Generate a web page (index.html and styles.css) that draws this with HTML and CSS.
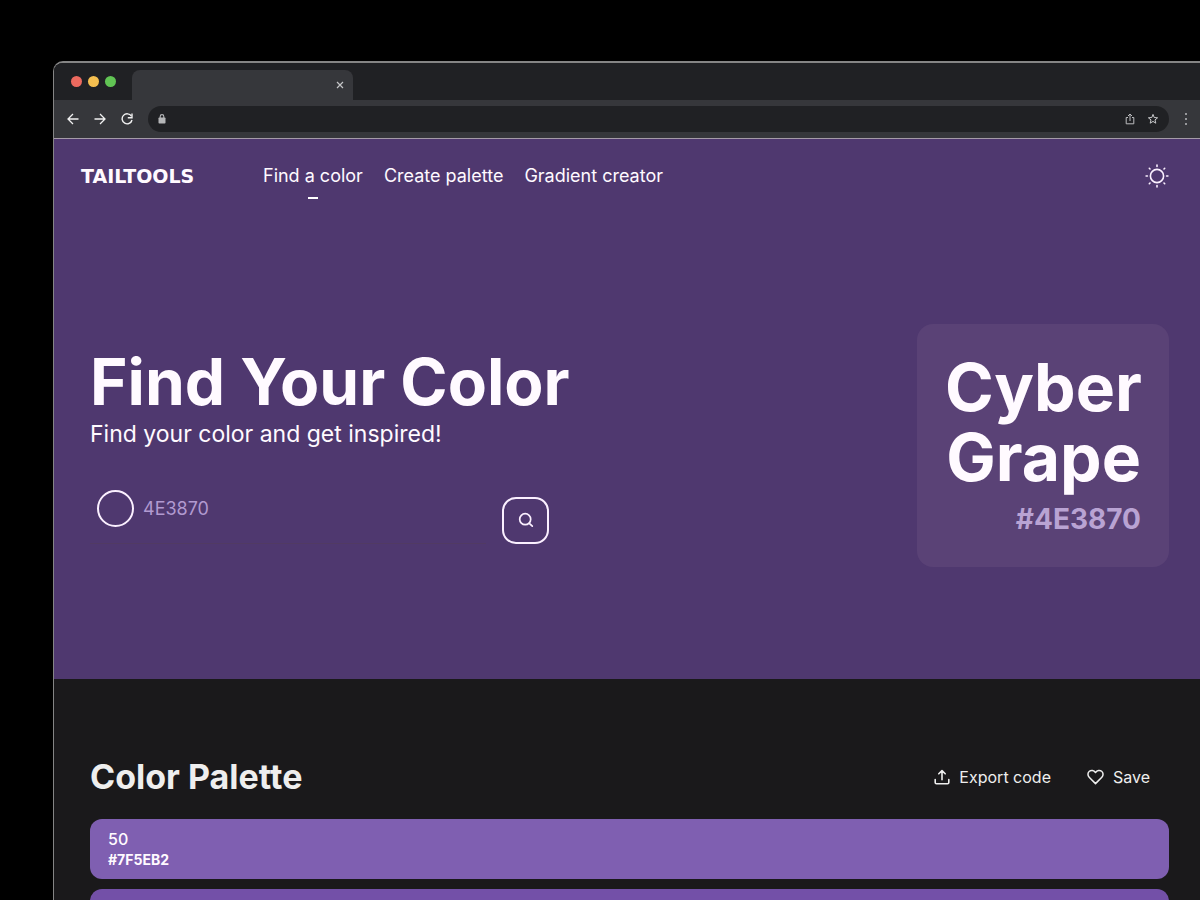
FILE: index.html
```html
<!DOCTYPE html>
<html lang="en">
<head>
<meta charset="utf-8">
<meta name="viewport" content="width=device-width, initial-scale=1">
<title>Tailtools</title>
<link rel="stylesheet" href="styles.css">
</head>
<body>
<div class="window">
  <div class="tabs">
    <div class="lights"><span class="light red"></span><span class="light yellow"></span><span class="light green"></span></div>
    <div class="tab">
      <button class="icon-button" aria-label="Close tab"><svg width="8" height="8" viewBox="0 0 8 8" stroke="#c4c5c7" stroke-width="1.2"><path d="M1 1l6 6M7 1L1 7"/></svg></button>
    </div>
  </div>
  <div class="toolbar">
    <button class="icon-button" aria-label="Back"><svg width="12" height="12" viewBox="0 0 12 12" fill="none" stroke="#f1f1f1" stroke-width="1.3"><path d="M11.500 6H1.200M6 1L1 6l5 5"/></svg></button>
    <button class="icon-button" aria-label="Forward"><svg width="12" height="12" viewBox="0 0 12 12" fill="none" stroke="#f1f1f1" stroke-width="1.3"><path d="M.5 6h10.300M6 1l5 5-5 5"/></svg></button>
    <button class="icon-button" aria-label="Reload"><svg width="12" height="12" viewBox="0 0 12 12" fill="none" stroke="#f1f1f1" stroke-width="1.4"><path d="M10.400 3.200A5 5 0 1 0 11 7"/><path d="M11 .5v4.200H6.800"/></svg></button>
    <div class="address">
      <svg width="8" height="10" viewBox="0 0 8 10"><rect x=".5" y="3.500" width="7" height="6" rx=".8" fill="#b5b6b8"/><path d="M2.200 4V2.400a1.800 1.800 0 0 1 3.600 0V4" fill="none" stroke="#b5b6b8" stroke-width="1.100"/></svg>
      <input class="url" type="text" aria-label="Address">
      <button class="icon-button" aria-label="Share"><svg width="10" height="12" viewBox="0 0 10 12" fill="none" stroke="#bcbdbf" stroke-width="1"><path d="M3 4.500H1.200v6.300h7.600V4.500H7M5 8V1.200M3 3l2-2 2 2"/></svg></button>
      <button class="icon-button" aria-label="Bookmark"><svg width="12" height="12" viewBox="0 0 12 12" fill="none" stroke="#c8c9cb" stroke-width="1"><path d="M6 1.400l1.200 3.100 3.400.3-2.600 2.100.8 3.300L6 8.400l-2.800 1.800.8-3.300L1.400 4.800l3.400-.3z"/></svg></button>
    </div>
    <button class="icon-button" aria-label="Menu"><svg width="4" height="14" viewBox="0 0 4 14" fill="#b9babc"><circle cx="2" cy="2" r="1"/><circle cx="2" cy="7" r="1"/><circle cx="2" cy="12" r="1"/></svg></button>
  </div>
  <header class="hero">
    <div class="topbar">
      <a class="logo" href="#">TAILTOOLS</a>
      <nav class="nav">
        <a class="nav-link active" href="#">Find a color</a>
        <a class="nav-link" href="#">Create palette</a>
        <a class="nav-link" href="#">Gradient creator</a>
      </nav>
      <button class="icon-button" aria-label="Toggle theme"><svg width="24" height="24" viewBox="0 0 24 24" fill="none" stroke="#fbf0ff" stroke-width="1.600" stroke-linecap="round"><circle cx="12" cy="12" r="6.600"/><path d="M12 1.100v1.300M12 21.600v1.300M1.100 12h1.300M21.600 12h1.300M4.300 4.300l.7.700M19 19l.7.700M4.300 19.700l.7-.7M19 5l.7-.7"/></svg></button>
    </div>
    <div class="hero-body">
      <div class="intro">
        <h1 class="title">Find Your Color</h1>
        <p class="subtitle">Find your color and get inspired!</p>
        <form class="search">
          <div class="field">
            <span class="swatch"></span>
            <input class="hex-input" type="text" placeholder="4E3870" aria-label="Hex color">
          </div>
          <button class="search-button" type="button" aria-label="Search"><svg width="16" height="18" viewBox="0 0 16 18" fill="none" stroke="#fbf0ff" stroke-width="1.700" stroke-linecap="round"><circle cx="7.200" cy="7.200" r="5.500"/><path d="M11.300 11.300l3 2.900"/></svg></button>
        </form>
      </div>
      <aside class="card">
        <h2 class="card-name">Cyber Grape</h2>
        <p class="card-hex">#4E3870</p>
      </aside>
    </div>
  </header>
  <main class="palette">
    <div class="palette-head">
      <h2 class="palette-title">Color Palette</h2>
      <div class="actions">
        <button class="action"><svg width="16" height="16" viewBox="0 0 16 16" fill="none" stroke="#eee" stroke-width="1.600" stroke-linecap="round" stroke-linejoin="round"><path d="M1.200 10.500v3q0 1.300 1.300 1.300h11q1.300 0 1.300-1.300v-3M8 10.800V1.800M4.800 4.800L8 1.600l3.200 3.200"/></svg>Export code</button>
        <button class="action"><svg width="17" height="16" viewBox="0 0 18 16" fill="none" stroke="#eee" stroke-width="1.600" stroke-linejoin="round"><path d="M9 15L2.300 8.200C.4 6.200.7 3.300 2.500 1.900 4.400.4 7.200.9 9 3.300c1.800-2.400 4.600-2.900 6.500-1.400 1.800 1.400 2.100 4.300.2 6.300z"/></svg>Save</button>
      </div>
    </div>
    <ul class="shades">
      <li class="shade shade-50"><span class="shade-step">50</span><span class="shade-hex">#7F5EB2</span></li>
      <li class="shade shade-100"></li>
    </ul>
  </main>
</div>
</body>
</html>
```
FILE: styles.css
```css
* { box-sizing: border-box; margin: 0; padding: 0; }
body { height: 100vh; overflow: hidden; padding: 61px 0 0 53px; background: #000; font-family: Inter, sans-serif; color: #fffaff; }
button, input { border: 0; background: none; color: inherit; font: inherit; }
a { color: inherit; text-decoration: none; }
svg { display: block; flex: none; }
.icon-button { display: flex; flex: none; }
.window { height: 100%; overflow: hidden; border: solid #858585; border-width: 2px 0 0 1px; border-radius: 10px 0 0 0; background: #1a191b; }
.tabs { display: flex; align-items: flex-end; height: 37px; padding-left: 17px; background: #202124; }
.lights { display: flex; gap: 6px; padding-bottom: 13px; margin-right: 16px; }
.light { width: 11px; height: 11px; border-radius: 50%; }
.red { background: #ec6a5f; }
.yellow { background: #f4bf50; }
.green { background: #61c454; }
.tab { display: flex; align-items: center; justify-content: flex-end; width: 221px; height: 30px; padding-right: 9px; border-radius: 8px 8px 0 0; background: #36373b; }
.toolbar { display: flex; align-items: center; gap: 15px; height: 39px; padding: 0 12px 0 13px; border-bottom: 1px solid #a59ba8; background: #36373b; }
.address { display: flex; flex: 1; align-items: center; gap: 12px; height: 26px; padding: 0 10px; border-radius: 13px; background: #202124; }
.url { flex: 1; min-width: 0; height: 20px; }
.hero { padding: 24px 31px 112px 27px; background: #4f386f; }
.topbar { display: flex; align-items: center; height: 26px; }
.logo { width: 182px; font: bold 19px "DejaVu Sans", sans-serif; }
.nav { display: flex; flex: 1; gap: 21px; font-size: 18px; line-height: 26px; }
.nav-link { position: relative; }
.active::after { content: ""; position: absolute; left: 50%; bottom: -10px; width: 10px; height: 2px; margin-left: -5px; background: #fff; }
.hero-body { display: flex; justify-content: space-between; padding: 135px 0 0 9px; }
.title { padding-top: 20px; font-size: 64px; line-height: 76px; font-weight: 700; }
.subtitle { font-size: 23px; line-height: 28px; }
.search { display: flex; align-items: flex-end; justify-content: space-between; width: 459px; margin-top: 48px; }
.field { display: flex; gap: 9px; width: 396px; height: 48px; padding-left: 7px; border-bottom: 1px solid #513a63; }
.swatch { flex: none; width: 37px; height: 37px; margin-top: -6px; border: 2px solid #fbf0ff; border-radius: 50%; }
.hex-input { flex: 1; min-width: 0; height: 24px; font-size: 18px; }
.hex-input::placeholder { color: #b19ad0; opacity: 1; }
.search-button { display: flex; align-items: center; justify-content: center; width: 47px; height: 47px; border: 2px solid #fbf0ff; border-radius: 14px; }
.card { width: 252px; padding: 28px; border-radius: 16px; background: #5a4276; text-align: right; }
.card-name { font-size: 66px; line-height: 70px; }
.card-hex { padding-top: 8px; font-size: 28px; line-height: 39px; font-weight: 700; color: #b9a3d3; }
.palette { padding: 80px 31px 0 36px; }
.palette-head { display: flex; align-items: center; justify-content: space-between; }
.palette-title { font-size: 34px; line-height: 36px; color: #eee; }
.actions { display: flex; gap: 36px; padding-right: 19px; }
.action { display: flex; align-items: center; gap: 9px; font-size: 16px; color: #eee; }
.shades { display: grid; gap: 10px; margin-top: 24px; list-style: none; }
.shade { display: flex; flex-direction: column; height: 60px; padding: 10px 18px; border-radius: 12px; }
.shade-50 { background: #7f5fb1; }
.shade-100 { background: #7350a8; }
.shade-step { font-size: 16px; line-height: 20px; font-weight: 500; }
.shade-hex { font-size: 14px; line-height: 22px; font-weight: 700; }
```
